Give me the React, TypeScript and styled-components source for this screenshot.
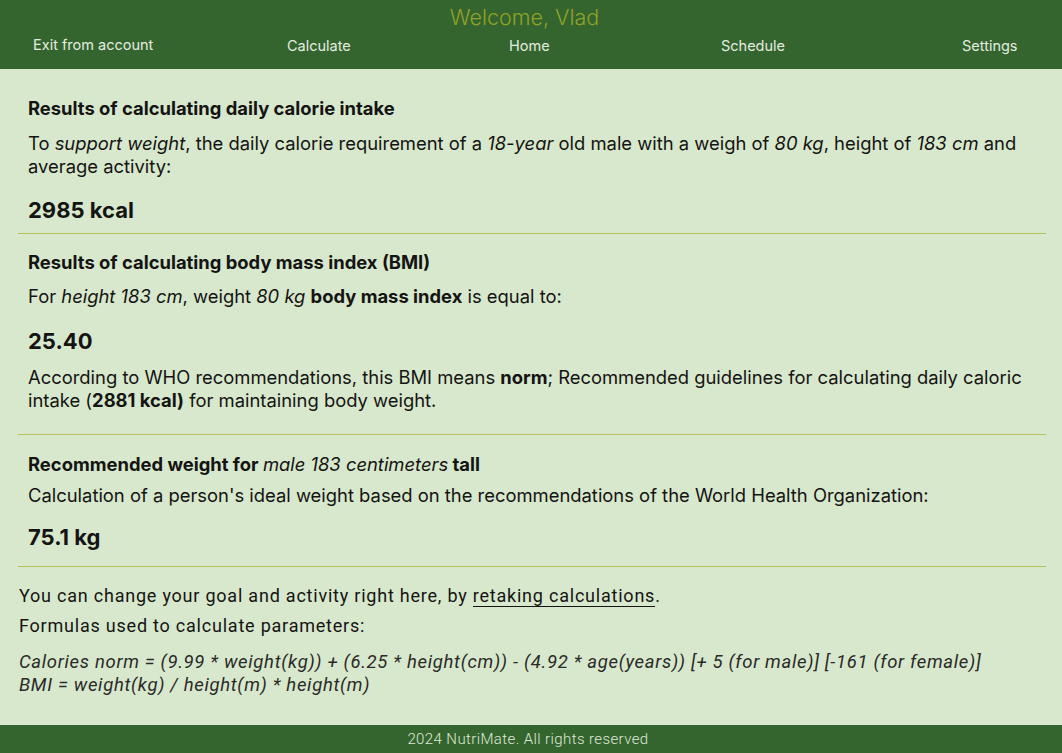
import React from "react";
import styled, { createGlobalStyle } from "styled-components";

const GlobalStyle = createGlobalStyle`
  html, body { margin: 0; padding: 0; }
  body {
    background: #d8e8cc;
    font-family: Inter, "Noto Sans", sans-serif;
    color: #141414;
  }
  #root { min-height: 100vh; display: flex; flex-direction: column; }
`;

const Page = styled.div`
  min-height: 100vh;
  display: flex;
  flex-direction: column;
  background: #d8e8cc;
`;

const Header = styled.header`
  height: 69px;
  box-sizing: border-box;
  background: #35652f;
  padding-top: 4px;
`;

const Welcome = styled.div`
  text-align: center;
  padding-right: 13px;
  font-size: 21.5px;
  font-weight: 300;
  line-height: 26px;
  color: #8fa227;
`;

const Nav = styled.nav`
  display: grid;
  grid-template-columns: 254px 222px 212px 241px auto;
  padding-left: 33px;
  margin-top: 5px;
`;

const NavItem = styled.a<{ $dy?: number }>`
  font-size: 14.5px;
  font-weight: 400;
  line-height: 20px;
  color: #e4ece0;
  text-decoration: none;
  cursor: pointer;
  margin-top: ${(p) => p.$dy ?? 0}px;
  justify-self: start;
`;

const Main = styled.main`
  flex: 1;
  padding: 0 16px 0 18px;
`;

const Section = styled.section<{ $pt: number; $pb: number }>`
  padding: ${(p) => p.$pt}px 10px ${(p) => p.$pb}px 10px;
  border-bottom: 1px solid #b7c25a;
`;

const Title = styled.h2`
  margin: 0;
  font-size: 18.4px;
  font-weight: 700;
  line-height: 24px;
`;

const Light = styled.i`
  font-weight: 400;
`;

const Text = styled.p<{ $mt: number }>`
  margin: ${(p) => p.$mt}px 0 0 0;
  font-size: 18.4px;
  font-weight: 400;
  line-height: 23px;
`;

const Big = styled.div<{ $mt: number }>`
  margin-top: ${(p) => p.$mt}px;
  font-size: 22px;
  font-weight: 700;
  line-height: 28px;
`;

const Bottom = styled.div`
  padding: 18px 0 0 1px;
  font-family: Roboto, "Noto Sans", sans-serif;
  letter-spacing: 0.78px;
`;

const Line = styled.p<{ $mt: number }>`
  margin: ${(p) => p.$mt}px 0 0 0;
  font-size: 18px;
  line-height: 22px;
  font-weight: 400;
`;

const Link = styled.a`
  color: inherit;
  text-decoration: none;
  border-bottom: 1.5px solid #141414;
  cursor: pointer;
`;

const Formulas = styled.div`
  margin-top: 14px;
  font-style: italic;
  font-size: 18.5px;
  letter-spacing: 0.68px;
  line-height: 23px;
  color: #2a2a2a;
`;

const Footer = styled.footer`
  height: 28px;
  background: #35652f;
  color: #dfe8d8;
  font-family: Roboto, "Noto Sans", sans-serif;
  font-size: 15px;
  letter-spacing: 0.4px;
  font-weight: 300;
  display: flex;
  align-items: center;
  justify-content: center;
  padding-right: 6px;
`;

export default function App() {
  return (
    <>
      <GlobalStyle />
      <Page>
        <Header>
          <Welcome>Welcome, Vlad</Welcome>
          <Nav>
            <NavItem $dy={0}>Exit from account</NavItem>
            <NavItem $dy={1}>Calculate</NavItem>
            <NavItem $dy={1}>Home</NavItem>
            <NavItem $dy={1}>Schedule</NavItem>
            <NavItem $dy={1}>Settings</NavItem>
          </Nav>
        </Header>
        <Main>
          <Section $pt={27} $pb={9}>
            <Title>Results of calculating daily calorie intake</Title>
            <Text $mt={12}>
              To <i>support weight</i>, the daily calorie requirement of a <i>18-year</i> old male with a weigh of{" "}
              <i>80 kg</i>, height of <i>183 cm</i> and average activity:
            </Text>
            <Big $mt={18}>2985 kcal</Big>
          </Section>
          <Section $pt={16} $pb={22}>
            <Title>Results of calculating body mass index (BMI)</Title>
            <Text $mt={11}>
              For <i>height 183 cm</i>, weight <i>80 kg</i> <b>body mass index</b> is equal to:
            </Text>
            <Big $mt={19}>25.40</Big>
            <Text $mt={11}>
              According to WHO recommendations, this BMI means <b>norm</b>; Recommended guidelines for calculating daily
              caloric intake (<b>2881 kcal)</b> for maintaining body weight.
            </Text>
          </Section>
          <Section $pt={17} $pb={15}>
            <Title>
              Recommended weight for <Light>male 183 centimeters</Light> tall
            </Title>
            <Text $mt={8}>
              Calculation of a person's ideal weight based on the recommendations of the World Health Organization:
            </Text>
            <Big $mt={16}>75.1 kg</Big>
          </Section>
          <Bottom>
            <Line $mt={0}>
              You can change your goal and activity right here, by <Link>retaking calculations</Link>.
            </Line>
            <Line $mt={8}>Formulas used to calculate parameters:</Line>
            <Formulas>
              Calories norm = (9.99 * weight(kg)) + (6.25 * height(cm)) - (4.92 * age(years)) [+ 5 (for male)] [-161 (for
              female)]
              <br />
              BMI = weight(kg) / height(m) * height(m)
            </Formulas>
          </Bottom>
        </Main>
        <Footer>2024 NutriMate. All rights reserved</Footer>
      </Page>
    </>
  );
}
